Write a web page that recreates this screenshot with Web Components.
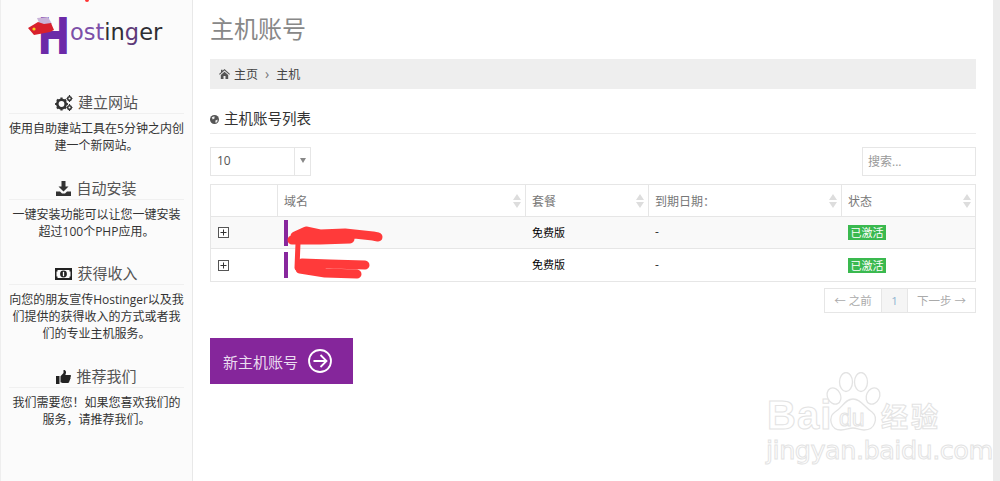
<!DOCTYPE html>
<html lang="zh"><head><meta charset="utf-8"><title>主机账号</title>
<style>
html,body{margin:0;padding:0;background:#fff;overflow:hidden}
body{font-family:"Open Sans","Noto Sans CJK SC",sans-serif;width:1000px;height:481px;color:#333}
</style></head><body>
<x-app>
  <x-sidebar slot="side">
    <x-logo></x-logo>
    <x-side-block heading="建立网站" style="margin-bottom:24px">
      <svg slot="icon" width="18" height="16" viewBox="0 0 18 16"><g fill="#333"><circle cx="6.5" cy="9" r="4.2" fill="none" stroke="#333" stroke-width="2.6"/><g stroke="#333" stroke-width="2.2"><path d="M6.5 2.6v2M6.5 13.4v2M.1 9h2M10.9 9h2M2 4.5l1.4 1.4M9.6 12.1l1.4 1.4M2 13.500l1.4-1.400M9.600 5.900L11 4.500"/></g></g><g fill="none" stroke="#333" stroke-width="1.500"><circle cx="14.500" cy="3.500" r="1.800"/><circle cx="14.500" cy="12.500" r="1.800"/></g><path d="M14.500 0v1M14.500 6v1M11.500 3.500h1M16.500 3.500h1M14.500 9v1M14.500 15v1M11.500 12.500h1M16.500 12.500h1" stroke="#333" stroke-width="1.200"/></svg>
      使用自助建站工具在5分钟之内创建一个新网站。
    </x-side-block>
    <x-side-block heading="自动安装">
      <svg slot="icon" width="15" height="15" viewBox="0 0 15 15"><path fill="#333" d="M5.500 0h4v5.500h3L7.500 10.500 2.500 5.500h3zM0 10.500h4l2 2h3l2-2h4V15H0z"/></svg>
      一键安装功能可以让您一键安装超过100个PHP应用。
    </x-side-block>
    <x-side-block heading="获得收入" style="margin-bottom:24px">
      <svg slot="icon" width="17" height="12" viewBox="0 0 17 12"><path fill="#222" fill-rule="evenodd" d="M0 0h17v12H0zM2.500 2v1.500H1.500v5h1V10h12V8.500h1v-5h-1V2z"/><circle cx="8.500" cy="6" r="3.400" fill="#222"/><path d="M8.500 3.800V8.200" stroke="#fff" stroke-width="1.300"/></svg>
      向您的朋友宣传Hostinger以及我们提供的获得收入的方式或者我们的专业主机服务。
    </x-side-block>
    <x-side-block heading="推荐我们">
      <svg slot="icon" width="15" height="14" viewBox="0 0 15 14"><path fill="#222" d="M0 6h3.500v8H0zM4.500 6.200 7.500 3V.3C7.500 0 9.800-.2 10 2c.1 1-.4 2.300-.7 3H14c1.300 0 1.200 1.700.3 2 .6.700.3 1.700-.3 2 .3.800 0 1.600-.7 1.900.2 1-.3 2.100-1.500 2.100H7.500c-1.500 0-1.800-.8-3-.8z"/></svg>
      我们需要您！如果您喜欢我们的服务，请推荐我们。
    </x-side-block>
  </x-sidebar>
  <x-main slot="main">
    <x-page-title>主机账号</x-page-title>
    <x-breadcrumb></x-breadcrumb>
    <x-section-title>主机账号列表</x-section-title>
    <x-table-controls></x-table-controls>
    <x-account-table></x-account-table>
    <x-pager></x-pager>
    <x-new-button>新主机账号</x-new-button>
  </x-main>
</x-app>
<x-watermark></x-watermark>
<script>
function def(name, html, setup){
  customElements.define(name, class extends HTMLElement{
    constructor(){super();this.attachShadow({mode:'open'}).innerHTML=typeof html==='function'?html(this):html;}
    connectedCallback(){ if(setup) setup(this); }
  });
}
def('x-app',`<style>:host{display:flex;width:1000px;height:481px;position:relative}
.side{flex:0 0 193px}.main{flex:1 1 auto;min-width:0}.gutter{flex:0 0 7px;background:#ececec}</style>
<div class="side"><slot name="side"></slot></div><div class="main"><slot name="main"></slot></div><div class="gutter"></div>
<div style="position:absolute;left:85px;top:0;width:4px;height:2px;background:#f33;border-radius:0 0 2px 2px"></div>`);
def('x-sidebar',`<style>:host{display:block;height:481px;box-sizing:border-box;background:#fbfbfb;border-left:1px solid #eee;border-right:1px solid #e8e8e8;padding:0 8px}</style><slot></slot>`);
def('x-logo',`<style>:host{display:block;height:92px;position:relative}
.row{display:flex;align-items:flex-start;padding:0 0 0 30px;height:60px;box-sizing:border-box}
.h{font:700 50px/48px "Liberation Sans",sans-serif;color:#6b2aa8;transform:scaleX(.82);transform-origin:0 50%;-webkit-text-stroke:2px #6b2aa8;display:block;width:31px;margin-top:12px}
.t{font:400 22.5px/30px "DejaVu Sans",sans-serif;color:#2e2e33;margin-top:17px}
.p{color:#7c4fa8}.m{color:#5e3a78}
svg{position:absolute;left:19px;top:16px}</style>
<div class="row"><span class="h">H</span><span class="t"><span class="p">ost</span>in<span class="m">g</span>er</span></div>
<svg width="30" height="22" viewBox="0 0 30 22"><path d="M9 2 20 1l4 7-12 1z" fill="#c9b3d8"/><path d="M0 12 10 6l6 2 7-1 3 7-4 2-16 3z" fill="#d8202c"/><circle cx="6" cy="13" r="1.600" fill="#f7d21c"/></svg>`);
def('x-side-block',el=>`<style>:host{display:block;text-align:center;margin-bottom:23px}
h4{margin:0;font:400 15px/21px "Open Sans","Noto Sans CJK SC",sans-serif;color:#555;border-bottom:1px solid #f0f0f0;display:flex;justify-content:center;align-items:center;gap:5px}
p{margin:6px 0 0;font-size:12px;line-height:17px;color:#333}
::slotted(svg){flex:none}</style>
<h4><slot name="icon"></slot><span>${el.getAttribute('heading')}</span></h4><p><slot></slot></p>`);
def('x-main',`<style>:host{display:block;width:766px;margin-left:17px}</style><slot></slot>`);
def('x-page-title',`<style>:host{display:block;height:59px;font-size:24px;line-height:57px;color:#888}</style><slot></slot>`);
def('x-breadcrumb',`<style>:host{display:flex;align-items:center;height:30px;background:#eee;padding-left:9px;font-size:12px;color:#444}
svg{margin-right:4px}.sep{margin:0 7px 0 7px;color:#777;font-size:14px;line-height:14px}</style>
<svg width="11" height="10" viewBox="0 0 11 10"><path fill="#555" d="M5.500 0 11 5l-.7.700L5.500 1.400.7 5.700 0 5l2-1.800V.8h1.500v1zM1.800 6l3.700-3.300L9.200 6v4H6.500V7h-2v3H1.800z"/></svg><span>主页</span><span class="sep">›</span><span>主机</span>`);
def('x-section-title',`<style>:host{display:flex;align-items:flex-start;gap:5px;margin-top:20px;height:24px;border-bottom:1px solid #ececec;font-size:14.500px;line-height:20px;color:#333}
svg{margin-top:6px}</style>
<svg width="9" height="9" viewBox="0 0 10 10"><circle cx="5" cy="5" r="5" fill="#555"/><path d="M2 2.500 5 1.500 5 4 3 5zM6 6l2.500-1L8 8 6 8.500z" fill="#eee"/></svg><span><slot></slot></span>`);
def('x-table-controls',`<style>:host{display:flex;justify-content:space-between;margin-top:13px;height:29px}
.sel,.search{box-sizing:border-box;border:1px solid #e6e6e6;background:#fff;height:29px;font-size:12px;display:flex;align-items:center;padding-bottom:2px}
.sel{width:101px;font:12px "Open Sans",sans-serif;color:#555}
.sel span{flex:1;padding-left:6px}.sel i{width:15px;height:29px;margin-bottom:-2px;border-left:1px solid #e6e6e6;display:flex;align-items:center;justify-content:center}
.sel i:after{content:"";border:3px solid transparent;border-top:5px solid #888;margin-top:0}
.search{width:114px;padding-left:5px;color:#999}</style>
<div class="sel"><span>10</span><i></i></div><div class="search">搜索...</div>`);
const sort='<svg width="8" height="14" viewBox="0 0 8 14"><path d="M4 0 8 6H0zM4 14 0 8h8z" fill="#ddd"/></svg>';
const plus='<svg width="11" height="11" viewBox="0 0 11 11"><rect x=".5" y=".5" width="10" height="10" fill="#fff" stroke="#555"/><path d="M2.500 5.500h6M5.500 2.500v6" stroke="#333"/></svg>';
const row=(cls)=>`<div class="r b ${cls}"><div class="c">${plus}</div><div class="c d"><i class="bar"></i></div><div class="c free">免费版</div><div class="c dash">-</div><div class="c"><span class="ok">已激活</span></div></div>`;
def('x-account-table',`<style>:host{display:block;position:relative;margin-top:8px;box-sizing:border-box;border:1px solid #e6e6e6;font-size:12px;height:98px}
.r{display:grid;grid-template-columns:66px 248px 123px 193px 1fr;}
.h{height:31px;color:#777}.h .c{border-left:1px solid #e6e6e6;justify-content:space-between;padding:0 4px 0 6px}
.h .c:first-child{border-left:0}
.b{height:32px;box-sizing:border-box;border-top:1px solid #e6e6e6}.alt{background:#f9f9f9}
.b+.b{height:33px}
.c{display:flex;align-items:center;padding-left:7px;box-sizing:border-box;min-width:0}
.free{font-size:11px;color:#000;font-weight:400;padding-bottom:2px}.dash{color:#333;padding-bottom:2px}
.bar{display:block;width:3.500px;height:26px;background:#88279d}
.d{padding-left:7px}
.ok{display:inline-block;background:#3ab94f;color:#fff;font-size:11px;line-height:15px;padding:0 2px;width:38px;box-sizing:border-box;text-align:center;white-space:nowrap}
.scrib{position:absolute;left:0;top:0;pointer-events:none}</style>
<div class="r h"><div class="c"></div><div class="c"><span>域名</span>${sort}</div><div class="c"><span>套餐</span>${sort}</div><div class="c"><span>到期日期：</span>${sort}</div><div class="c"><span>状态</span>${sort}</div></div>
${row('alt')}${row('')}
<svg class="scrib" width="200" height="100" viewBox="0 0 200 100"><g fill="none" stroke="#ff3a3a" stroke-linecap="round" stroke-linejoin="round"><path d="M84 51 95 46 109 49 134 48 162 51 167 52M81 55 109 55 139 54" stroke-width="9"/><path d="M87 58 86 83" stroke-width="5"/><path d="M91 78 119 79 154 80M89 84 114 88 146 89" stroke-width="9"/></g></svg>`);
def('x-pager',`<style>:host{display:flex;justify-content:flex-end;margin-top:6px}
.p{display:flex;height:25px;box-sizing:border-box;border:1px solid #e6e6e6;font-size:11.500px;color:#aaa;line-height:23px}
.p span{text-align:center;box-sizing:border-box;white-space:nowrap}
.a{width:56px}.n{width:27px;background:#f5f5f5;border-left:1px solid #e6e6e6;border-right:1px solid #e6e6e6;color:#8fb4d0}.z{width:67px}</style>
<div class="p"><span class="a">← 之前</span><span class="n">1</span><span class="z">下一步 →</span></div>`);
def('x-new-button',`<style>:host{display:flex;align-items:center;box-sizing:border-box;width:143px;height:46px;margin-top:25px;padding-left:13px;gap:10px;background:#85269b;font-size:15px;color:#eadcf0}</style>
<span><slot></slot></span><svg width="24" height="24" viewBox="0 0 24 24" fill="none" stroke="#fff" stroke-width="1.800"><circle cx="12" cy="12" r="11"/><path d="M5.500 12h12.500M12.500 6l6 6-6 6"/></svg>`);
def('x-watermark',`<style>:host{display:block;position:absolute;left:760px;top:370px;width:200px;height:95px;pointer-events:none}
div{position:absolute;color:#fff;-webkit-text-stroke:1px #e3e3e3;white-space:nowrap}
.b{left:7px;top:25px;font:700 40px/40px "Liberation Sans",sans-serif;letter-spacing:1px}
.c{left:121px;top:30px;font:700 27px/32px "Noto Sans CJK SC",sans-serif;letter-spacing:3px}
.u{left:6px;top:66px;font:400 25.500px/28px "DejaVu Sans",sans-serif;letter-spacing:-.5px}
svg{position:absolute;left:66px;top:2px}
.du{left:79px;top:37px;font:400 23px/22px "Liberation Sans",sans-serif}</style>
<div class="b">Bai</div><svg width="56" height="60" viewBox="0 0 56 60" fill="#fff" stroke="#e3e3e3" stroke-width="1.300"><ellipse cx="20" cy="10" rx="6.500" ry="9.500"/><ellipse cx="35" cy="10" rx="6.500" ry="9.500"/><ellipse cx="8" cy="24" rx="6.500" ry="8.500" transform="rotate(-25 8 24)"/><ellipse cx="47" cy="24" rx="6.500" ry="8.500" transform="rotate(25 47 24)"/><path d="M27 27c8 0 11 8 19 13 6 5 4 18-8 18-5 0-7-2-11-2s-7 2-12 2C4 58 2 45 9 40c8-5 10-13 18-13z"/></svg><div class="du">du</div><div class="c">经验</div><div class="u">jingyan.baidu.com</div>`);
</script>
</body></html>
